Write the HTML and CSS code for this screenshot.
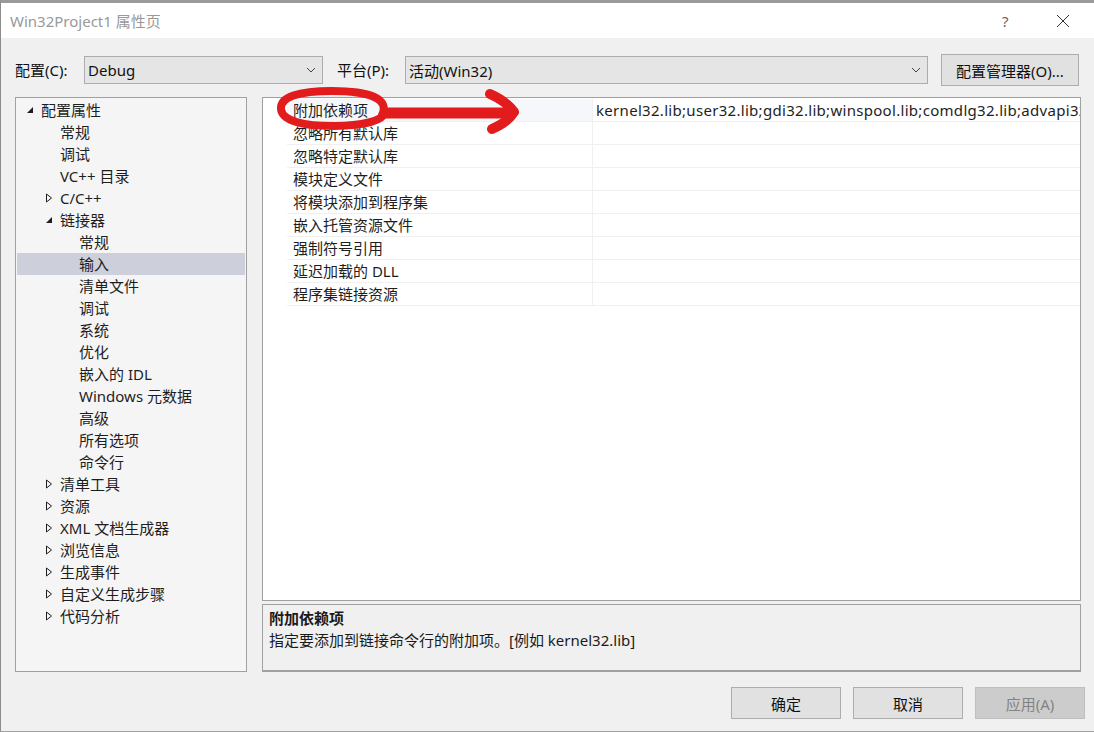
FILE: index.html
```html
<!DOCTYPE html>
<html lang="zh-CN">
<head>
<meta charset="utf-8">
<title>Win32Project1 属性页</title>
<link rel="stylesheet" href="styles.css">
</head>
<body>
<div class="window">
  <div class="titlebar">
    <span class="title">Win32Project1 属性页</span>
    <span class="tb-help">?</span>
    <span class="tb-close">
      <svg width="14" height="14" viewBox="0 0 14 14"><path d="M1 1 L13 13 M13 1 L1 13" stroke="#333" stroke-width="1" fill="none"/></svg>
    </span>
  </div>

  <div class="toolbar">
    <span class="lbl">配置(C):</span>
    <div class="combo combo-config"><span>Debug</span><svg class="chev" width="10" height="6" viewBox="0 0 10 6"><path d="M1 1 L5 5 L9 1" stroke="#444" fill="none"/></svg></div>
    <span class="lbl lbl-platform">平台(P):</span>
    <div class="combo combo-platform"><span>活动(Win32)</span><svg class="chev" width="10" height="6" viewBox="0 0 10 6"><path d="M1 1 L5 5 L9 1" stroke="#444" fill="none"/></svg></div>
    <button class="btn btn-manager">配置管理器(O)...</button>
  </div>

  <div class="main">
    <div class="tree">
      <div class="node l0"><span class="exp"><svg width="8" height="8" viewBox="0 0 8 8"><path d="M7 1 L7 7 L1 7 Z" fill="#1e1e1e"/></svg></span>配置属性</div>
      <div class="node l1">常规</div>
      <div class="node l1">调试</div>
      <div class="node l1">VC++ 目录</div>
      <div class="node l1 parent"><span class="exp"><svg width="8" height="10" viewBox="0 0 8 10"><path d="M1.5 1 L6.5 5 L1.5 9 Z" fill="none" stroke="#1e1e1e"/></svg></span>C/C++</div>
      <div class="node l1 parent"><span class="exp"><svg width="8" height="8" viewBox="0 0 8 8"><path d="M7 1 L7 7 L1 7 Z" fill="#1e1e1e"/></svg></span>链接器</div>
      <div class="node l2">常规</div>
      <div class="node l2 selected">输入</div>
      <div class="node l2">清单文件</div>
      <div class="node l2">调试</div>
      <div class="node l2">系统</div>
      <div class="node l2">优化</div>
      <div class="node l2">嵌入的 IDL</div>
      <div class="node l2">Windows 元数据</div>
      <div class="node l2">高级</div>
      <div class="node l2">所有选项</div>
      <div class="node l2">命令行</div>
      <div class="node l1 parent"><span class="exp"><svg width="8" height="10" viewBox="0 0 8 10"><path d="M1.5 1 L6.5 5 L1.5 9 Z" fill="none" stroke="#1e1e1e"/></svg></span>清单工具</div>
      <div class="node l1 parent"><span class="exp"><svg width="8" height="10" viewBox="0 0 8 10"><path d="M1.5 1 L6.5 5 L1.5 9 Z" fill="none" stroke="#1e1e1e"/></svg></span>资源</div>
      <div class="node l1 parent"><span class="exp"><svg width="8" height="10" viewBox="0 0 8 10"><path d="M1.5 1 L6.5 5 L1.5 9 Z" fill="none" stroke="#1e1e1e"/></svg></span>XML 文档生成器</div>
      <div class="node l1 parent"><span class="exp"><svg width="8" height="10" viewBox="0 0 8 10"><path d="M1.5 1 L6.5 5 L1.5 9 Z" fill="none" stroke="#1e1e1e"/></svg></span>浏览信息</div>
      <div class="node l1 parent"><span class="exp"><svg width="8" height="10" viewBox="0 0 8 10"><path d="M1.5 1 L6.5 5 L1.5 9 Z" fill="none" stroke="#1e1e1e"/></svg></span>生成事件</div>
      <div class="node l1 parent"><span class="exp"><svg width="8" height="10" viewBox="0 0 8 10"><path d="M1.5 1 L6.5 5 L1.5 9 Z" fill="none" stroke="#1e1e1e"/></svg></span>自定义生成步骤</div>
      <div class="node l1 parent"><span class="exp"><svg width="8" height="10" viewBox="0 0 8 10"><path d="M1.5 1 L6.5 5 L1.5 9 Z" fill="none" stroke="#1e1e1e"/></svg></span>代码分析</div>
    </div>

    <div class="right">
      <div class="grid">
        <div class="row active"><div class="name">附加依赖项</div><div class="value">kernel32.lib;user32.lib;gdi32.lib;winspool.lib;comdlg32.lib;advapi32.lib;shell32.lib;ole32.lib;oleaut32.lib;uuid.lib;odbc32.lib;odbccp32.lib;%(AdditionalDependencies)</div></div>
        <div class="row"><div class="name">忽略所有默认库</div><div class="value"></div></div>
        <div class="row"><div class="name">忽略特定默认库</div><div class="value"></div></div>
        <div class="row"><div class="name">模块定义文件</div><div class="value"></div></div>
        <div class="row"><div class="name">将模块添加到程序集</div><div class="value"></div></div>
        <div class="row"><div class="name">嵌入托管资源文件</div><div class="value"></div></div>
        <div class="row"><div class="name">强制符号引用</div><div class="value"></div></div>
        <div class="row"><div class="name">延迟加载的 DLL</div><div class="value"></div></div>
        <div class="row"><div class="name">程序集链接资源</div><div class="value"></div></div>
      </div>
      <div class="desc">
        <div class="desc-title">附加依赖项</div>
        <div class="desc-text">指定要添加到链接命令行的附加项。[例如 kernel32.lib]</div>
      </div>
    </div>
  </div>

  <div class="buttons">
    <button class="btn btn-dlg">确定</button>
    <button class="btn btn-dlg">取消</button>
    <button class="btn btn-dlg disabled">应用(A)</button>
  </div>

  <svg class="annotation" width="270" height="60" viewBox="0 0 270 60">
    <path d="M112 30 C120 14 100 6 62 6 C28 6 10 12 11 24 C12 36 34 41 64 41 C92 41 112 36 116 27" fill="none" stroke="#e21b1d" stroke-width="8" stroke-linecap="round"/>
    <path d="M116 28 L240 28" stroke="#e21b1d" stroke-width="11" stroke-linecap="round" fill="none"/>
    <path d="M220 9 Q236 16 244 27 Q238 37 222 44" stroke="#e21b1d" stroke-width="10" stroke-linecap="round" stroke-linejoin="round" fill="none"/>
  </svg>
</div>
</body>
</html>
```

FILE: styles.css
```css
* { box-sizing: border-box; }

html, body {
  margin: 0;
  padding: 0;
  background: #f0f0f0;
}

body {
  font-family: "Noto Sans", "Noto Sans CJK SC", sans-serif;
  font-size: 15px;
  color: #1a1a1a;
}

.window {
  position: relative;
  width: 1094px;
  height: 732px;
  background: #f0f0f0;
  border-left: 1px solid #8c8c8c;
  border-top: 3px solid #9a9a9a;
  border-bottom: 1px solid #a0a0a0;
  display: flex;
  flex-direction: column;
  overflow: hidden;
}

.titlebar {
  height: 35px;
  background: #ffffff;
  display: flex;
  align-items: center;
  padding-left: 9px;
  flex-shrink: 0;
}

.title {
  color: #999999;
  font-size: 15px;
  line-height: 20px;
  flex: 1;
}

.tb-help {
  color: #666;
  font-size: 15px;
  width: 20px;
  margin-right: 34px;
}

.tb-close {
  width: 14px;
  height: 14px;
  margin-right: 24px;
  display: flex;
}

.toolbar {
  display: flex;
  align-items: center;
  height: 28px;
  margin-top: 18px;
  padding-left: 14px;
  flex-shrink: 0;
}

.lbl {
  font-size: 15px;
  line-height: 28px;
  width: 69px;
  color: #111;
}

.lbl-platform {
  margin-left: 14px;
  width: 68px;
}

.combo {
  height: 28px;
  background: #e5e5e5;
  border: 1px solid #acacac;
  display: flex;
  align-items: center;
  justify-content: space-between;
  padding: 0 6px 0 3px;
  font-size: 15px;
  color: #111;
}

.combo-config { width: 239px; }
.combo-platform { width: 523px; }

.btn {
  font-family: "Noto Sans", "Noto Sans CJK SC", sans-serif;
  background: #e1e1e1;
  border: 1px solid #adadad;
  color: #111;
  padding: 0;
  margin: 0;
}

.btn-manager {
  width: 138px;
  height: 32px;
  margin-left: 13px;
  font-size: 15px;
}

.main {
  display: flex;
  margin-top: 13px;
  padding-left: 14px;
  height: 575px;
  flex-shrink: 0;
  gap: 15px;
}

.tree {
  width: 232px;
  height: 575px;
  background: #f5f5f5;
  border: 1px solid #a0a0a0;
  padding: 1px 0 0 1px;
}

.node {
  height: 22px;
  line-height: 22px;
  font-size: 15px;
  color: #1e1e1e;
  position: relative;
  white-space: nowrap;
}

.node.l0 { padding-left: 24px; }
.node.l1 { padding-left: 43px; }
.node.l2 { padding-left: 62px; }

.node.selected {
  background: #cdd0da;
  margin-right: 1px;
}

.exp {
  position: absolute;
  top: 0;
  height: 22px;
  display: flex;
  align-items: center;
}

.l0 .exp { left: 9px; }
.l1 .exp { left: 28px; }

.right {
  width: 819px;
  display: flex;
  flex-direction: column;
  gap: 3px;
}

.grid {
  height: 504px;
  background: #ffffff;
  border: 1px solid #a0a0a0;
  padding: 1px 0 0 24px;
  overflow: hidden;
}

.row {
  display: flex;
  height: 23px;
  border-bottom: 1px solid #f0f0f0;
}

.row .name {
  width: 306px;
  padding-left: 6px;
  line-height: 22px;
  font-size: 15px;
  color: #1e1e1e;
  border-right: 1px solid #f0f0f0;
  white-space: nowrap;
}

.row.active .name {
  background: #f5f7fa;
}

.row .value {
  flex: 1;
  padding-left: 3px;
  line-height: 22px;
  font-size: 15px;
  letter-spacing: 0.3px;
  color: #1e1e1e;
  white-space: nowrap;
  overflow: hidden;
}

.desc {
  height: 68px;
  background: #f0f0f0;
  border: 1px solid #a0a0a0;
  border-bottom-width: 2px;
  padding: 2px 6px;
}

.desc-title {
  font-weight: bold;
  line-height: 22px;
  font-size: 15px;
}

.desc-text {
  line-height: 22px;
  font-size: 15px;
}

.buttons {
  display: flex;
  justify-content: flex-end;
  gap: 12px;
  margin-top: 15px;
  padding-right: 9px;
}

.btn-dlg {
  width: 110px;
  height: 32px;
  font-size: 15px;
}

.btn-dlg.disabled {
  background: #cccccc;
  border-color: #bfbfbf;
  color: #838383;
}

.annotation {
  position: absolute;
  left: 269px;
  top: 82px;
  pointer-events: none;
}
```
